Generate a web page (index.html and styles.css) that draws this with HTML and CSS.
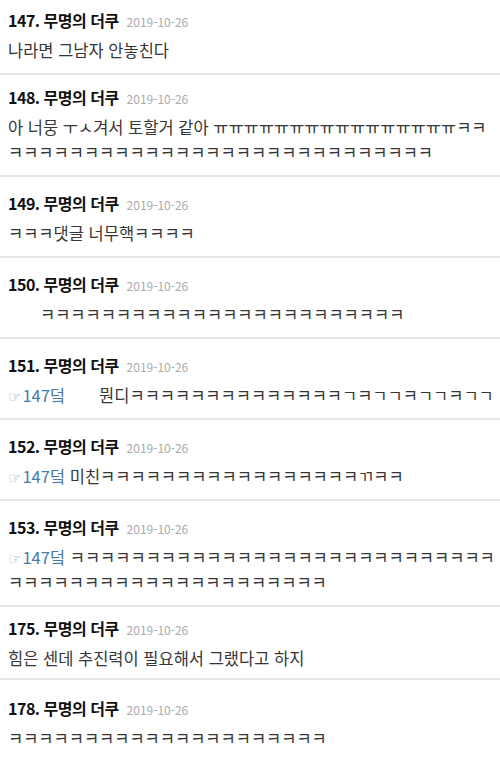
FILE: index.html
```html
<!DOCTYPE html>
<html lang="ko">
<head>
<meta charset="utf-8">
<title>댓글</title>
<link rel="stylesheet" href="styles.css">
</head>
<body>
<div class="list">
  <div class="comment first">
    <div class="head"><span class="num">147. 무명의 더쿠</span><span class="date">2019-10-26</span></div>
    <div class="line">나라면 그남자 안놓친다</div>
  </div>
  <div class="comment second">
    <div class="head"><span class="num">148. 무명의 더쿠</span><span class="date">2019-10-26</span></div>
    <div class="line">아 너뭉 ㅜㅅ겨서 토할거 같아 ㅠㅠㅠㅠㅠㅠㅠㅠㅠㅠㅠㅠㅠㅠㅠㅠㅋㅋ</div>
    <div class="line">ㅋㅋㅋㅋㅋㅋㅋㅋㅋㅋㅋㅋㅋㅋㅋㅋㅋㅋㅋㅋㅋㅋㅋㅋㅋㅋㅋㅋ</div>
  </div>
  <div class="comment">
    <div class="head"><span class="num">149. 무명의 더쿠</span><span class="date">2019-10-26</span></div>
    <div class="line">ㅋㅋㅋ댓글 너무핵ㅋㅋㅋㅋ</div>
  </div>
  <div class="comment">
    <div class="head"><span class="num">150. 무명의 더쿠</span><span class="date">2019-10-26</span></div>
    <div class="line indent">ㅋㅋㅋㅋㅋㅋㅋㅋㅋㅋㅋㅋㅋㅋㅋㅋㅋㅋㅋㅋㅋㅋㅋㅋ</div>
  </div>
  <div class="comment">
    <div class="head"><span class="num">151. 무명의 더쿠</span><span class="date">2019-10-26</span></div>
    <div class="line"><span class="ref"><span class="hand">☞</span>147덬</span><span class="wide">뭔디ㅋㅋㅋㅋㅋㅋㅋㅋㅋㅋㅋㅋㅋㅋㄱㅋㄱㄱㅋㄱㄱㅋㄱㄱ</span></div>
  </div>
  <div class="comment">
    <div class="head"><span class="num">152. 무명의 더쿠</span><span class="date">2019-10-26</span></div>
    <div class="line"><span class="ref"><span class="hand">☞</span>147덬</span> 미친ㅋㅋㅋㅋㅋㅋㅋㅋㅋㅋㅋㅋㅋㅋㅋㅋㅋㄲㅋㅋ</div>
  </div>
  <div class="comment">
    <div class="head"><span class="num">153. 무명의 더쿠</span><span class="date">2019-10-26</span></div>
    <div class="line"><span class="ref"><span class="hand">☞</span>147덬</span> ㅋㅋㅋㅋㅋㅋㅋㅋㅋㅋㅋㅋㅋㅋㅋㅋㅋㅋㅋㅋㅋㅋㅋㅋㅋㅋㅋㅋ</div>
    <div class="line">ㅋㅋㅋㅋㅋㅋㅋㅋㅋㅋㅋㅋㅋㅋㅋㅋㅋㅋㅋㅋㅋ</div>
  </div>
  <div class="comment short">
    <div class="head"><span class="num">175. 무명의 더쿠</span><span class="date">2019-10-26</span></div>
    <div class="line">힘은 센데 추진력이 필요해서 그랬다고 하지</div>
  </div>
  <div class="comment last">
    <div class="head"><span class="num">178. 무명의 더쿠</span><span class="date">2019-10-26</span></div>
    <div class="line">ㅋㅋㅋㅋㅋㅋㅋㅋㅋㅋㅋㅋㅋㅋㅋㅋㅋㅋㅋㅋㅋ</div>
  </div>
</div>
</body>
</html>
```

FILE: styles.css
```css
html, body {
  margin: 0;
  padding: 0;
  background: #ffffff;
}
body {
  width: 500px;
  height: 761px;
  overflow: hidden;
  font-family: "Noto Sans CJK KR", "Noto Sans", sans-serif;
}
.list {
  display: flex;
  flex-direction: column;
}
.comment {
  padding: 16px 8px 10px;
  border-bottom: 2px solid #e6e6e6;
  display: flex;
  flex-direction: column;
  gap: 8px;
}
.comment.first {
  padding-top: 10px;
  padding-bottom: 10px;
}
.comment.second {
  padding-top: 12px;
}
.comment.short {
  padding-top: 11px;
  padding-bottom: 7px;
}
.comment.last {
  border-bottom: none;
  padding-top: 18px;
}
.head {
  display: flex;
  align-items: baseline;
  gap: 8px;
  height: 20px;
  line-height: 20px;
}
.num {
  font-size: 16px;
  font-weight: 700;
  color: #111111;
  letter-spacing: -0.5px;
}
.date {
  font-size: 12px;
  color: #ababab;
}
.line {
  font-size: 16.5px;
  height: 25px;
  line-height: 25px;
  color: #363636;
  white-space: nowrap;
}
.comment .line + .line {
  margin-top: -8px;
}
.indent {
  padding-left: 32px;
}
.ref {
  color: #4a7aa6;
}
.hand {
  font-family: "DejaVu Sans", sans-serif;
  font-size: 15px;
  line-height: 1;
  color: #8fa9c2;
  margin-right: 1px;
}
.wide {
  margin-left: 34px;
}
```
